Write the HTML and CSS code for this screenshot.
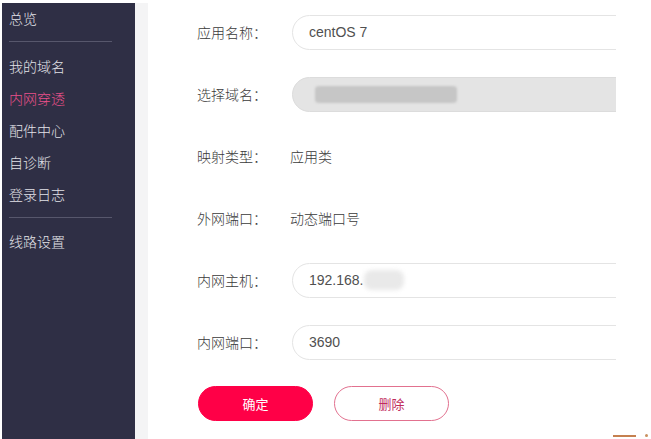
FILE: index.html
```html
<!DOCTYPE html>
<html lang="zh-CN">
<head>
<meta charset="utf-8">
<title>内网穿透</title>
<link rel="stylesheet" href="styles.css">
</head>
<body>
<div class="page">
  <nav class="sidebar">
    <div class="nav-item first">总览</div>
    <div class="nav-divider top"></div>
    <div class="nav-item">我的域名</div>
    <div class="nav-item active">内网穿透</div>
    <div class="nav-item">配件中心</div>
    <div class="nav-item">自诊断</div>
    <div class="nav-item">登录日志</div>
    <div class="nav-divider bottom"></div>
    <div class="nav-item">线路设置</div>
  </nav>
  <div class="gutter"></div>
  <main class="main">
    <div class="row">
      <div class="label">应用名称：</div>
      <div class="field">centOS 7</div>
    </div>
    <div class="row">
      <div class="label">选择域名：</div>
      <div class="field disabled"><span class="mask-dark"></span></div>
    </div>
    <div class="row">
      <div class="label">映射类型：</div>
      <div class="value">应用类</div>
    </div>
    <div class="row">
      <div class="label">外网端口：</div>
      <div class="value">动态端口号</div>
    </div>
    <div class="row">
      <div class="label">内网主机：</div>
      <div class="field">192.168.<span class="mask-light"></span></div>
    </div>
    <div class="row">
      <div class="label">内网端口：</div>
      <div class="field">3690</div>
    </div>
    <div class="actions">
      <button class="btn primary">确定</button>
      <button class="btn outline">删除</button>
    </div>
  </main>
</div>
<div class="float-tab"></div>
<div class="float-dot"></div>
</body>
</html>
```
FILE: styles.css
```css
html, body {
  margin: 0;
  padding: 0;
  background: #ffffff;
  font-family: "Liberation Sans", "Noto Sans CJK SC", sans-serif;
  overflow: hidden;
}

.page {
  display: flex;
  height: 439px;
  padding-top: 3px;
  padding-left: 2px;
  box-sizing: border-box;
}

.sidebar {
  width: 133px;
  flex: none;
  background: #2f2f45;
  color: #e2e2e8;
  font-family: "Noto Sans CJK SC", sans-serif;
  font-weight: 300;
  font-size: 14px;
  overflow: hidden;
}

.nav-item {
  height: 32px;
  line-height: 32px;
  padding-left: 7px;
  white-space: nowrap;
}

.nav-item.first {
  height: 30px;
  line-height: 30px;
}

.nav-item.active {
  color: #e8508a;
}

.nav-divider {
  height: 1px;
  width: 103px;
  margin-left: 7px;
  background: #57576c;
}

.nav-divider.top {
  margin-top: 8px;
  margin-bottom: 8px;
}

.nav-divider.bottom {
  margin-top: 7px;
  margin-bottom: 7px;
}

.gutter {
  width: 13px;
  flex: none;
  background: #f4f4f5;
}

.main {
  width: 468px;
  flex: none;
  overflow: hidden;
  padding-top: 11px;
  padding-left: 49px;
  box-sizing: border-box;
}

.row {
  display: flex;
  align-items: center;
  height: 36px;
  margin-bottom: 26px;
}

.label {
  width: 93px;
  flex: none;
  font-family: "Noto Sans CJK SC", sans-serif;
  font-weight: 300;
  font-size: 14px;
  color: #3a3a3a;
  white-space: nowrap;
}

.value {
  font-family: "Noto Sans CJK SC", sans-serif;
  font-weight: 300;
  font-size: 14px;
  color: #3a3a3a;
  white-space: nowrap;
}

.field {
  flex: none;
  display: flex;
  align-items: center;
  width: 380px;
  height: 35px;
  margin-left: 2px;
  padding-left: 16px;
  box-sizing: border-box;
  border: 1px solid #e4e4e4;
  border-radius: 18px;
  background: #ffffff;
  font-size: 14px;
  color: #505050;
  white-space: nowrap;
}

.field.disabled {
  background: #e4e4e4;
  border-color: #dcdcdc;
  padding-left: 22px;
}

.mask-dark {
  display: inline-block;
  width: 142px;
  height: 17px;
  background: #c6c6c6;
  border-radius: 4px;
  filter: blur(1px);
}

.mask-light {
  display: inline-block;
  width: 40px;
  height: 20px;
  background: #e9e9e9;
  border-radius: 8px;
  filter: blur(2px);
}

.actions {
  display: flex;
  gap: 21px;
  padding-left: 1px;
}

.btn {
  width: 115px;
  height: 35px;
  border-radius: 18px;
  font-family: "Noto Sans CJK SC", sans-serif;
  font-size: 13px;
  cursor: pointer;
  padding: 0;
}

.btn.primary {
  background: #ff0047;
  border: 1px solid #ff0047;
  color: #ffffff;
}

.btn.outline {
  background: #ffffff;
  border: 1px solid #e2718f;
  color: #c12c5c;
}

.float-tab {
  position: absolute;
  left: 613px;
  top: 435px;
  width: 23px;
  height: 2px;
  background: #c5804f;
}

.float-dot {
  position: absolute;
  left: 645px;
  top: 434px;
  width: 3px;
  height: 3px;
  border-radius: 2px;
  background: #c9905f;
}
```
